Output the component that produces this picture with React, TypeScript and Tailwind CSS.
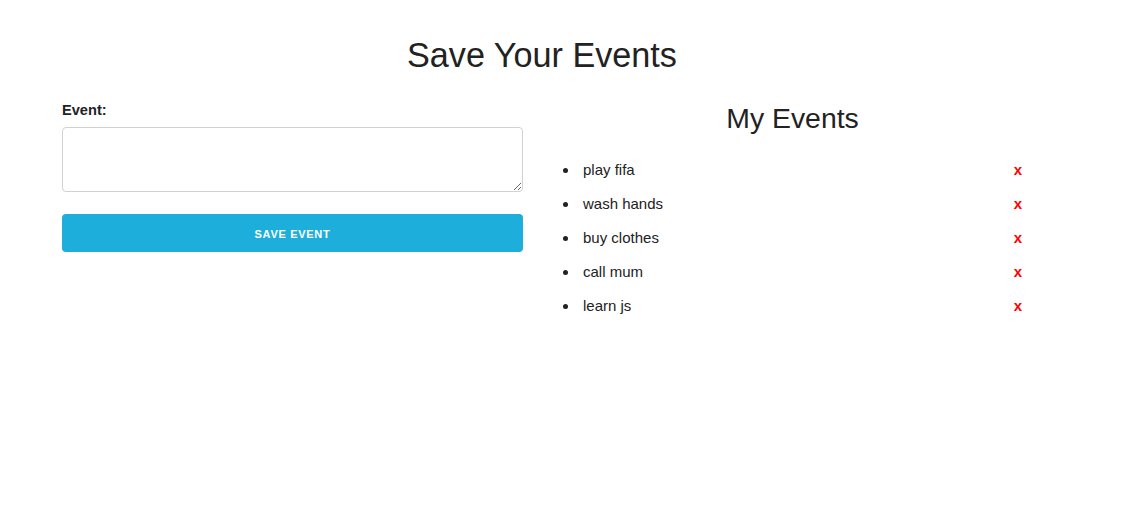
import { useState } from "react";

const INITIAL_EVENTS = ["play fifa", "wash hands", "buy clothes", "call mum", "learn js"];

export default function App() {
  const [events, setEvents] = useState<string[]>(INITIAL_EVENTS);
  const [draft, setDraft] = useState("");

  const saveEvent = () => {
    const text = draft.trim();
    if (!text) return;
    setEvents([...events, text]);
    setDraft("");
  };

  return (
    <div className="min-h-screen bg-white text-[#222] font-['Liberation_Sans',Arial,sans-serif] pt-[35px]">
      <div className="w-[960px] ml-[62px]">
        {/* Title */}
        <h1 className="h-[40px] text-center text-[34.2px] leading-[40px] font-normal">
          Save Your Events
        </h1>

        <div className="flex mt-[24px]">
          {/* Form */}
          <div className="w-[461px] pt-[1px]">
            <label htmlFor="event" className="block h-[20px] text-[14.6px] leading-[20px] font-bold mb-[7px]">
              Event:
            </label>
            <textarea
              id="event"
              value={draft}
              onChange={(e) => setDraft(e.target.value)}
              className="block w-full h-[65px] rounded border border-[#d1d1d1] px-[10px] py-[6px] text-[15px] outline-none focus:border-[#33c3f0]"
            />
            <button
              onClick={saveEvent}
              className="mt-[22px] w-full h-[38px] pt-[2px] rounded bg-[#1eaedb] text-white text-[11px] font-bold uppercase tracking-[0.7px]"
            >
              Save Event
            </button>
          </div>

          {/* List */}
          <div className="flex-1 ml-[20px]">
            <h2 className="pl-5 mt-[2px] h-[34px] text-center text-[28.4px] leading-[34px] font-normal">My Events</h2>
            <ul className="mt-[18px] pl-5 text-[15px] leading-[34px]">
              {events.map((ev, i) => (
                <li key={i} className="flex items-center">
                  <span className="w-[5px] h-[5px] rounded-full bg-[#222] shrink-0 mr-[15px] mt-[1px]" />
                  <span className="flex-1">{ev}</span>
                  <button
                    onClick={() => setEvents(events.filter((_, j) => j !== i))}
                    className="text-[#ff0000] font-bold text-[15px] leading-[34px]"
                  >
                    x
                  </button>
                </li>
              ))}
            </ul>
          </div>
        </div>
      </div>
    </div>
  );
}
